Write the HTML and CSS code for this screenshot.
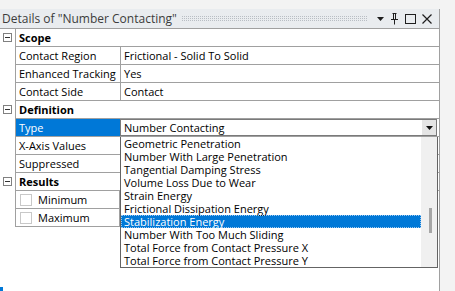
FILE: index.html
```html
<!DOCTYPE html>
<html>

<head>
    <title>Details of "Number Contacting"</title>
    <link rel="stylesheet" href="styles.css">
</head>

<body>
    <div class="panel">
        <div class="titlebar">
            <span class="title">Details of "Number Contacting"</span>
            <span class="grip"></span>
            <svg class="tb-icon" width="9" height="9" viewBox="0 0 9 9"><path d="M1 3h7l-3.5 4z" fill="#1e1e1e"/></svg>
            <svg class="tb-icon" width="11" height="13" viewBox="0 0 11 13"><path d="M3.5 1.5h4M4.5 1.5v6M6.5 1.5v6M2 7.5h7M5.5 7.5v5" stroke="#1e1e1e" fill="none"/></svg>
            <svg class="tb-icon" width="13" height="13" viewBox="0 0 13 13"><rect x="1.5" y="2.5" width="10" height="9" stroke="#1e1e1e" fill="none"/></svg>
            <svg class="tb-icon" width="12" height="12" viewBox="0 0 12 12"><path d="M1.5 1.5l9 9M10.5 1.5l-9 9" stroke="#1e1e1e" stroke-width="1.2" fill="none"/></svg>
        </div>

        <div class="grid">
            <div class="row head"><span class="toggle"></span><span class="cell-head">Scope</span></div>
            <div class="row"><span class="label">Contact Region</span><span class="value">Frictional - Solid To Solid</span></div>
            <div class="row"><span class="label">Enhanced Tracking</span><span class="value">Yes</span></div>
            <div class="row"><span class="label">Contact Side</span><span class="value">Contact</span></div>

            <div class="row head"><span class="toggle"></span><span class="cell-head">Definition</span></div>
            <div class="row"><span class="label selected">Type</span>
                <span class="value combo">Number Contacting<span class="combo-btn"><svg width="7" height="4" viewBox="0 0 7 4"><path d="M0 0h7l-3.5 4z" fill="#111"/></svg></span></span>
            </div>
            <div class="row"><span class="label">X-Axis Values</span><span class="value"></span></div>
            <div class="row"><span class="label">Suppressed</span><span class="value"></span></div>

            <div class="row head"><span class="toggle"></span><span class="cell-head">Results</span></div>
            <div class="row short"><span class="label"><span class="check"></span>Minimum</span></div>
            <div class="row short"><span class="label"><span class="check"></span>Maximum</span></div>

            <ul class="dropdown">
                <li>Geometric Penetration</li>
                <li>Number With Large Penetration</li>
                <li>Tangential Damping Stress</li>
                <li>Volume Loss Due to Wear</li>
                <li>Strain Energy</li>
                <li>Frictional Dissipation Energy</li>
                <li class="active">Stabilization Energy</li>
                <li>Number With Too Much Sliding</li>
                <li>Total Force from Contact Pressure X</li>
                <li>Total Force from Contact Pressure Y</li>
                <span class="scrollbar"><span class="thumb"></span></span>
            </ul>
        </div>
    </div>
    <span class="corner"></span>
</body>

</html>
```

FILE: styles.css
```css
body {
    margin: 0;
    background-color: #f3f3f3;
    font-family: "Segoe UI", "Open Sans", sans-serif;
    font-size: 11px;
    color: #000;
    height: 291px;
    overflow: hidden;
    position: relative;
}

.panel {
    margin-top: 9px;
    width: 439px;
    height: 282px;
    background-color: #fff;
    border-right: 1px solid #a0a0a0;
}

.titlebar {
    height: 19px;
    display: flex;
    align-items: center;
    background-color: #e9ecef;
    border-bottom: 1px solid #a0a0a0;
    padding: 0 6px 0 2px;
}

.title {
    font-size: 12px;
    color: #3c3c3c;
    white-space: nowrap;
}

/* dotted drag grip */
.grip {
    flex: 1;
    height: 5px;
    margin: 0 4px 0 5px;
    background-image:
        repeating-linear-gradient(180deg, transparent 0 1px, #e9ecef 1px 2px),
        repeating-linear-gradient(90deg, #b9bec4 0 1px, transparent 1px 2px);
}

.tb-icon {
    margin-left: 4px;
}

.grid {
    position: relative;
}

.row {
    display: flex;
    height: 17px;
    line-height: 17px;
    border-bottom: 1px solid #a0a0a0;
    margin-left: 15px;
}

.row.short {
    margin-right: 319px;
}

.row.head {
    margin-left: 0;
    border-bottom: none;
    height: 18px;
    line-height: 18px;
}

.toggle {
    width: 9px;
    height: 9px;
    margin: 4px 3px 0 3px;
    border: 1px solid #808080;
    box-sizing: border-box;
    position: relative;
}

.toggle::after {
    content: "";
    position: absolute;
    left: 1px;
    right: 1px;
    top: 3px;
    height: 1px;
    background-color: #333;
}

.cell-head {
    flex: 1;
    font-weight: bold;
    padding-left: 3px;
    border-left: 1px solid #a0a0a0;
    border-bottom: 1px solid #a0a0a0;
    height: 17px;
    line-height: 17px;
}

.label {
    width: 101px;
    padding-left: 3px;
    border-left: 1px solid #a0a0a0;
    white-space: nowrap;
    display: flex;
    align-items: center;
}

.row.short .label {
    flex: 1;
    border-right: 1px solid #a0a0a0;
}

.label.selected {
    background-color: #0078d7;
    color: #fff;
}

.value {
    flex: 1;
    padding-left: 3px;
    border-left: 1px solid #a0a0a0;
    white-space: nowrap;
}

.combo {
    border: 1px solid #7a7a7a;
    margin-right: 2px;
    display: flex;
    align-items: center;
    line-height: 15px;
}

.combo-btn {
    margin-left: auto;
    width: 14px;
    height: 15px;
    background-color: #e5e5e5;
    display: flex;
    align-items: center;
    justify-content: center;
}

.check {
    width: 12px;
    height: 12px;
    border: 1px solid #c8c8c8;
    box-sizing: border-box;
    margin: 0 6px 0 1px;
}

.dropdown {
    position: absolute;
    top: 108px;
    left: 120px;
    width: 316px;
    height: 130px;
    margin: 0;
    padding: 0;
    list-style: none;
    background-color: #fff;
    border: 1px solid #646464;
    border-top: none;
}

.dropdown li {
    height: 13px;
    line-height: 13px;
    padding-left: 3px;
    margin-right: 16px;
    white-space: nowrap;
}

.dropdown li.active {
    background-color: #0078d7;
    color: #fff;
    outline: 1px dotted #9cc8f0;
    outline-offset: -1px;
}

.scrollbar {
    position: absolute;
    top: 0;
    right: 0;
    width: 16px;
    height: 130px;
    background-color: #f0f0f0;
}

.thumb {
    position: absolute;
    left: 8px;
    top: 71px;
    width: 3px;
    height: 25px;
    background-color: #a6a6a6;
}

.corner {
    position: absolute;
    left: 0;
    bottom: 0;
    width: 3px;
    height: 4px;
    background-color: #0078d7;
}
```
